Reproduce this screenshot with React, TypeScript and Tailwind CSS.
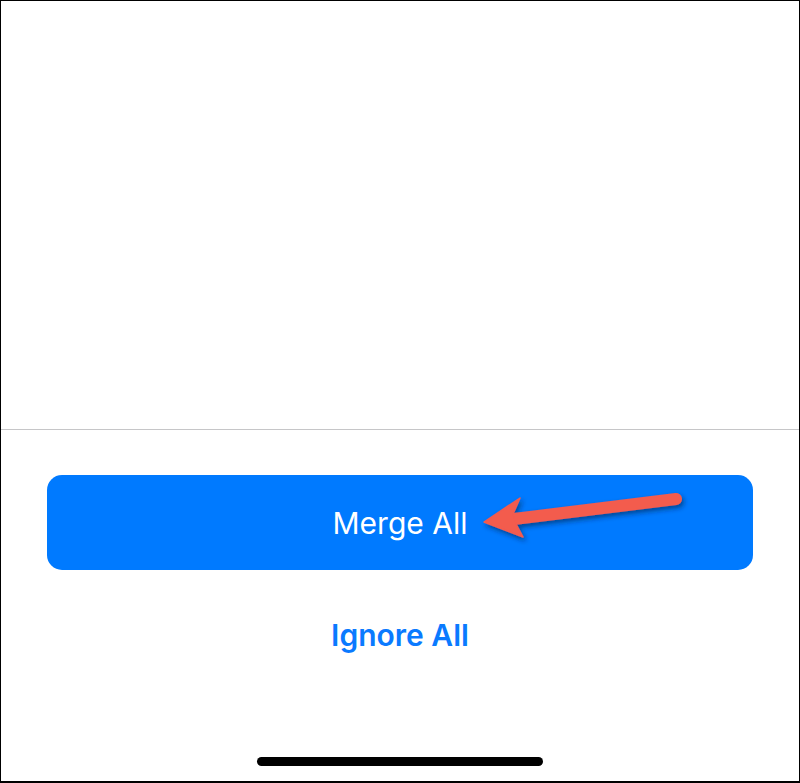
const font = { fontFamily: 'Inter, "Noto Sans", sans-serif' };

function Arrow() {
  // red annotation arrow pointing at the button label
  return (
    <svg
      className="absolute left-0 top-0 pointer-events-none"
      width="705"
      height="95"
      viewBox="47 475 705 95"
    >
      <defs>
        <filter id="sh" x="-20%" y="-50%" width="140%" height="200%">
          <feDropShadow dx="2" dy="3" stdDeviation="2.5" floodColor="#001a40" floodOpacity="0.55" />
        </filter>
      </defs>
      <g filter="url(#sh)" fill="#f35b4e" stroke="#f35b4e">
        <line x1="514" y1="519" x2="676" y2="499" strokeWidth="12" strokeLinecap="round" />
        <path d="M484 522 L520 498 L513 514 L516 524 L523 537 Z" strokeWidth="1.5" strokeLinejoin="round" />
      </g>
    </svg>
  );
}

export default function App() {
  return (
    <div
      className="w-[800px] h-[783px] border border-b-2 border-black bg-white flex flex-col"
      style={font}
    >
      <div className="h-[428px] flex-none" />
      <div className="h-px bg-[#c6c6c8] flex-none" />

      <div className="relative mt-[45px] mx-[46px] h-[95px] rounded-[15px] bg-[#007aff] flex items-center justify-center">
        <span className="text-[30px] leading-[34px] text-white">Merge All</span>
        <Arrow />
      </div>

      <div className="mt-[48px] flex justify-center">
        <span className="text-[30px] leading-[34px] font-semibold text-[#0a7aff]">Ignore All</span>
      </div>

      <div className="mt-[105px] flex justify-center">
        <div className="w-[286px] h-[9px] rounded-full bg-black" />
      </div>
    </div>
  );
}
